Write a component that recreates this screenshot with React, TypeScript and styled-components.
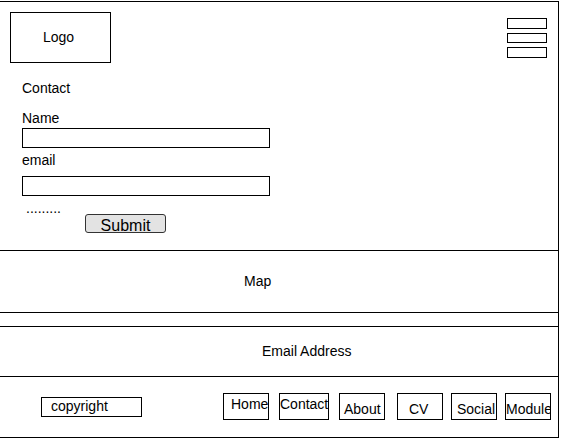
import React from "react";
import styled, { createGlobalStyle } from "styled-components";

const Global = createGlobalStyle`
  html, body { margin: 0; padding: 0; background: #fff; }
  body {
    font-family: "Liberation Sans", Arial, sans-serif;
    font-size: 14px;
    line-height: 16px;
    color: #000;
  }
  * { box-sizing: border-box; }
`;

const Frame = styled.div`
  width: 559px;
  height: 437px;
  margin-top: 1px;
  border-top: 1px solid #000;
  border-right: 1px solid #000;
  border-bottom: 1px solid #000;
  display: flex;
  flex-direction: column;
`;

const Header = styled.header`
  height: 249px;
  border-bottom: 1px solid #000;
  display: flex;
  flex-direction: column;
`;

const TopBar = styled.div`
  display: flex;
  justify-content: space-between;
  align-items: flex-start;
  padding: 10px 11px 0 10px;
`;

const LogoBox = styled.div`
  width: 101px;
  height: 51px;
  border: 1px solid #000;
  display: flex;
  align-items: center;
  justify-content: center;
  padding: 0 4px 2px 0;
`;

const Burger = styled.div`
  margin-top: 6px;
  display: flex;
  flex-direction: column;
  gap: 4px;
`;

const BurgerBar = styled.div<{ $h: number }>`
  width: 40px;
  height: ${(p) => p.$h}px;
  border: 1px solid #000;
`;

const Form = styled.form`
  display: flex;
  flex-direction: column;
  align-items: flex-start;
  padding-left: 22px;
  margin: 0;
`;

const Label = styled.div<{ $mt: number }>`
  margin-top: ${(p) => p.$mt}px;
  height: 16px;
`;

const Field = styled.input<{ $mt: number }>`
  margin: ${(p) => p.$mt}px 0 0 0;
  width: 248px;
  height: 20px;
  border: 1px solid #000;
  border-radius: 0;
  padding: 0 2px;
  outline: none;
  background: #fff;
  font: inherit;
`;

const ActionRow = styled.div`
  display: flex;
  align-items: flex-start;
  margin-top: 4px;
`;

const Dots = styled.span`
  width: 63px;
  padding-left: 4px;
`;

const SubmitButton = styled.button`
  margin-top: 14px;
  width: 81px;
  height: 19px;
  padding: 2px 0 0 0;
  border: 1px solid #333;
  border-radius: 3px;
  background: #e3e3e3;
  font-family: "Liberation Sans", Arial, sans-serif;
  font-size: 16px;
  line-height: 17px;
  color: #000;
  display: flex;
  justify-content: center;
  align-items: flex-start;
  overflow: hidden;
  appearance: none;
`;

const Band = styled.section<{ $h: number; $pl: number; $pt: number }>`
  height: ${(p) => p.$h}px;
  border-bottom: 1px solid #000;
  padding-left: ${(p) => p.$pl}px;
  padding-top: ${(p) => p.$pt}px;
`;

const Footer = styled.footer`
  flex: 1;
  display: flex;
  align-items: flex-start;
  padding-top: 16px;
`;

const Copyright = styled.div`
  margin-left: 41px;
  margin-top: 4px;
  width: 101px;
  height: 20px;
  border: 1px solid #000;
  padding-left: 9px;
`;

const Nav = styled.nav`
  display: flex;
  align-items: flex-start;
  margin-left: 81px;
`;

const NavBox = styled.a<{ $w: number; $ml: number; $pl: number; $pt: number }>`
  width: ${(p) => p.$w}px;
  height: 27px;
  margin-left: ${(p) => p.$ml}px;
  border: 1px solid #000;
  padding-left: ${(p) => p.$pl}px;
  padding-top: ${(p) => p.$pt}px;
  color: #000;
  text-decoration: none;
  white-space: nowrap;
  overflow: hidden;
`;

const navItems = [
  { label: "Home", w: 46, ml: 0, pl: 7, pt: 2 },
  { label: "Contact", w: 50, ml: 10, pl: 0, pt: 2 },
  { label: "About", w: 46, ml: 10, pl: 4, pt: 7 },
  { label: "CV", w: 46, ml: 12, pl: 11, pt: 7 },
  { label: "Social", w: 46, ml: 8, pl: 5, pt: 7 },
  { label: "Module", w: 46, ml: 8, pl: 0, pt: 7 },
];

export default function App() {
  return (
    <>
      <Global />
      <Frame>
        <Header>
          <TopBar>
            <LogoBox>Logo</LogoBox>
            <Burger>
              <BurgerBar $h={11} />
              <BurgerBar $h={10} />
              <BurgerBar $h={11} />
            </Burger>
          </TopBar>
          <Form onSubmit={(e) => e.preventDefault()}>
            <Label $mt={17}>Contact</Label>
            <Label $mt={14}>Name</Label>
            <Field $mt={2} type="text" aria-label="Name" />
            <Label $mt={4}>email</Label>
            <Field $mt={8} type="text" aria-label="email" />
            <ActionRow>
              <Dots>.........</Dots>
              <SubmitButton type="submit">Submit</SubmitButton>
            </ActionRow>
          </Form>
        </Header>
        <Band $h={62} $pl={244} $pt={22}>Map</Band>
        <Band $h={14} $pl={0} $pt={0} />
        <Band $h={50} $pl={262} $pt={16}>Email Address</Band>
        <Footer>
          <Copyright>copyright</Copyright>
          <Nav>
            {navItems.map((n) => (
              <NavBox key={n.label} href="#" $w={n.w} $ml={n.ml} $pl={n.pl} $pt={n.pt}>
                {n.label}
              </NavBox>
            ))}
          </Nav>
        </Footer>
      </Frame>
    </>
  );
}
